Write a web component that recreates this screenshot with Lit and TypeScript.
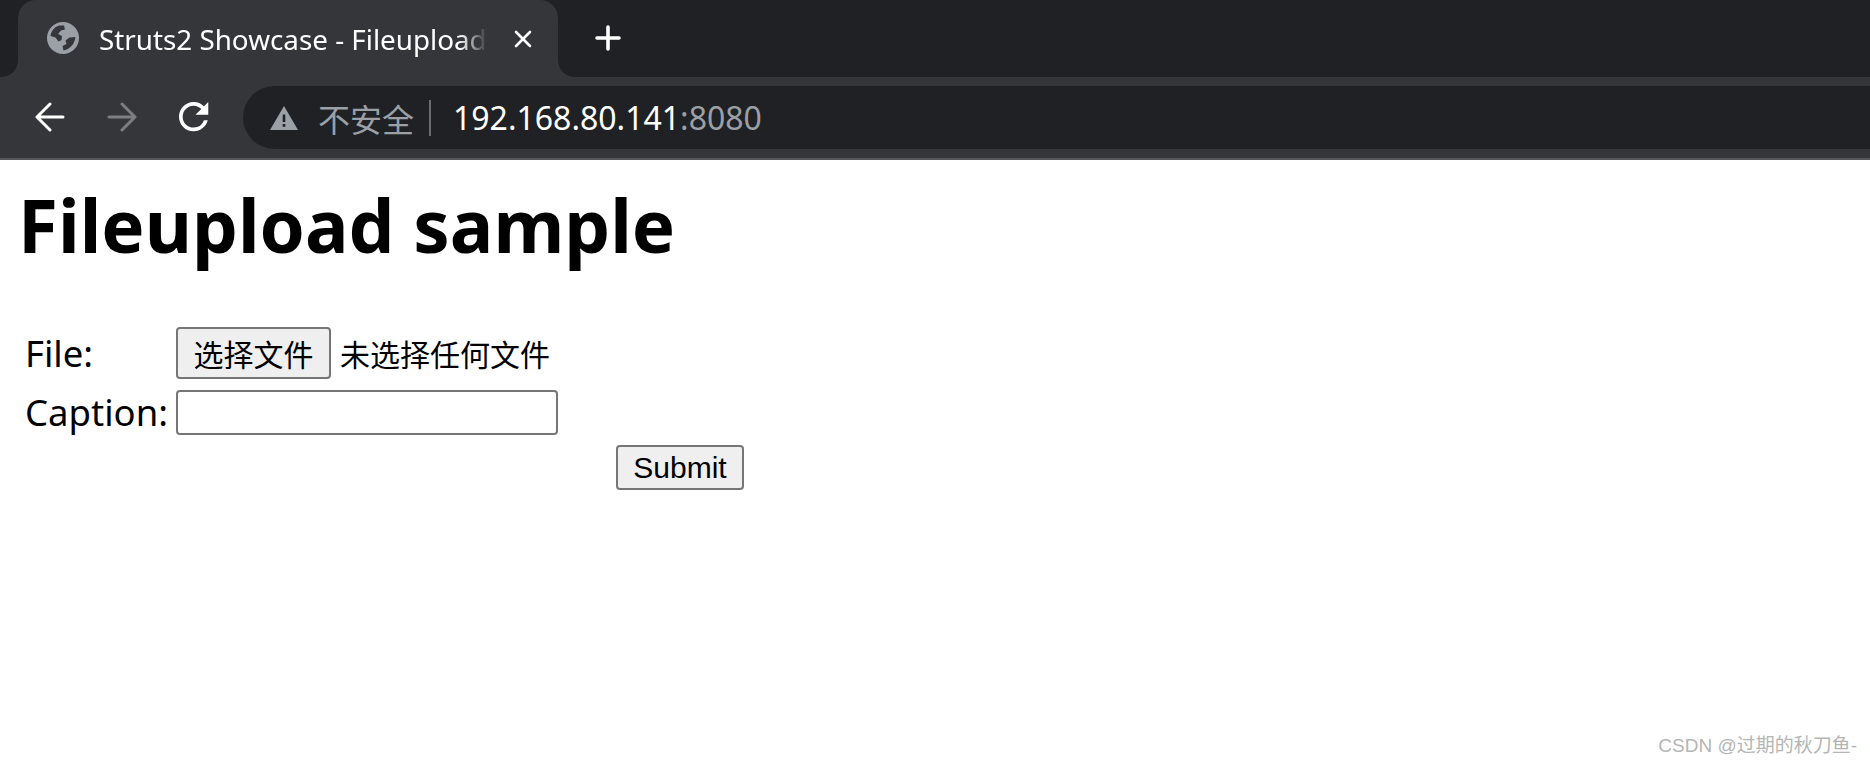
import { LitElement, html, css } from "lit";
import { customElement } from "lit/decorators.js";

const UI_FONT = css`"Noto Sans", "Noto Sans CJK SC", sans-serif`;

@customElement("app-root")
export class AppRoot extends LitElement {
  static styles = css`
    :host {
      display: block;
      width: 1870px;
      height: 766px;
      position: relative;
      overflow: hidden;
      background: #fff;
      color: #000;
      font-family: ${UI_FONT};
    }

    /* browser chrome */
    .strip {
      display: flex;
      align-items: stretch;
      height: 77px;
      padding-left: 18px;
      background: #202124;
    }
    .tab {
      position: relative;
      display: flex;
      align-items: center;
      width: 540px;
      box-sizing: border-box;
      padding: 0 0 0 29px;
      background: #35363a;
      border-radius: 18px 18px 0 0;
    }
    .tab::before,
    .tab::after {
      content: "";
      position: absolute;
      bottom: 0;
      width: 16px;
      height: 16px;
    }
    .tab::before {
      left: -16px;
      background: radial-gradient(circle at 0 0, #202124 15.5px, #35363a 16px);
    }
    .tab::after {
      right: -16px;
      background: radial-gradient(circle at 100% 0, #202124 15.5px, #35363a 16px);
    }
    .globe {
      width: 32px;
      height: 32px;
      flex: none;
      margin-top: -1px;
    }
    .title {
      width: 388px;
      margin-left: 20px;
      font-size: 27.8px;
      line-height: 36px;
      color: #fff;
      white-space: nowrap;
      overflow: hidden;
      -webkit-mask-image: linear-gradient(to right, #000 93%, transparent 100%);
      mask-image: linear-gradient(to right, #000 93%, transparent 100%);
    }
    .close {
      width: 18px;
      height: 18px;
      margin-left: 27px;
      flex: none;
    }
    .plus {
      width: 28px;
      height: 28px;
      margin: 24px 0 0 36px;
      flex: none;
    }
    .toolbar {
      display: flex;
      align-items: center;
      gap: 42px;
      height: 83px;
      box-sizing: border-box;
      padding-left: 35px;
      background: #35363a;
      border-bottom: 2px solid #55565a;
    }
    .nav {
      width: 30px;
      height: 30px;
      flex: none;
      margin-bottom: 2px;
    }
    .omnibox {
      display: flex;
      align-items: center;
      flex: 1;
      height: 63px;
      margin-left: -8px;
      padding-left: 27px;
      border-radius: 31.5px 0 0 31.5px;
      background: #202124;
      font-size: 32px;
      white-space: nowrap;
    }
    .warn {
      width: 28px;
      height: 24px;
      flex: none;
    }
    .insecure {
      margin-left: 20px;
      color: #9aa0a6;
      font-size: 32px;
    }
    .sep {
      width: 2px;
      height: 36px;
      margin: 0 22px 0 15px;
      background: #6b6d70;
    }
    .host {
      color: #fff;
    }
    .port {
      color: #9aa0a6;
    }

    /* page */
    .page {
      padding: 0 18px;
    }
    h1 {
      margin: 0;
      padding-top: 14px;
      font-size: 72.7px;
      line-height: 102px;
      font-weight: 700;
      white-space: nowrap;
    }
    table {
      margin: 40px 0 0 2px;
      border-collapse: separate;
      border-spacing: 5px 11px;
      font-size: 36.5px;
      line-height: 40px;
    }
    td {
      padding: 0;
      vertical-align: middle;
    }
    .label {
      padding-right: 3px;
    }
    .file-cell {
      display: flex;
      align-items: center;
      gap: 9px;
    }
    button {
      box-sizing: border-box;
      margin: 0;
      padding: 0;
      background: #efefef;
      border: 2px solid #767676;
      border-radius: 4px;
      color: #000;
    }
    .pick {
      width: 155px;
      height: 52px;
      font: 30px "Noto Sans CJK SC", sans-serif;
    }
    .none {
      font: 30px/40px "Noto Sans CJK SC", sans-serif;
    }
    input {
      display: block;
      box-sizing: border-box;
      width: 382px;
      height: 45px;
      margin: 0 0 -1px;
      border: 2px solid #767676;
      border-radius: 4px;
      background: #fff;
    }
    .submit {
      display: block;
      width: 128px;
      height: 45px;
      margin: 0 -186px 0 auto;
      font: 30px "Liberation Sans", sans-serif;
    }
    .mark {
      position: absolute;
      right: 13px;
      bottom: 8px;
      color: #b5b5b5;
      font: 19px/24px "Liberation Sans", "Noto Sans CJK SC", sans-serif;
    }
  `;

  render() {
    return html`
      <div class="strip">
        <div class="tab">
          <svg class="globe" viewBox="0 0 32 32">
            <circle cx="16" cy="16" r="16" fill="#9aa0a6" />
            <path
              fill="#35363a"
              d="M12 3.5C7.5 5 4 9 3.5 14l5 1.5 3 4 3-1.5 .5-4-4-2 3-3.5 4-1-1-4zM28.5 15l-6 .5-4 3 1 3.5-4 2 1 4.5c5-.5 11-5.5 12-13.5z"
            />
          </svg>
          <div class="title">Struts2 Showcase - Fileupload</div>
          <svg class="close" viewBox="0 0 18 18">
            <path d="M2 2l14 14M16 2L2 16" stroke="#fff" stroke-width="2.6" stroke-linecap="round" />
          </svg>
        </div>
        <svg class="plus" viewBox="0 0 28 28">
          <path d="M14 3v22M3 14h22" stroke="#fff" stroke-width="3.6" stroke-linecap="round" />
        </svg>
      </div>
      <div class="toolbar">
        <svg class="nav" viewBox="0 0 30 30" fill="none" stroke="#fff" stroke-width="3" stroke-linecap="round" stroke-linejoin="round">
          <path d="M28 15H2M15 2L2 15l13 13" />
        </svg>
        <svg class="nav" viewBox="0 0 30 30" fill="none" stroke="#7d7e81" stroke-width="3" stroke-linecap="round" stroke-linejoin="round">
          <path d="M2 15h26M15 2l13 13-13 13" />
        </svg>
        <svg class="nav" viewBox="4 4 16.4 16.4">
          <path
            fill="#fff"
            d="M17.65 6.35A7.958 7.958 0 0 0 12 4c-4.42 0-7.99 3.58-7.99 8s3.57 8 7.99 8c3.73 0 6.84-2.55 7.73-6h-2.08A5.99 5.99 0 0 1 12 18c-3.31 0-6-2.69-6-6s2.69-6 6-6c1.66 0 3.14.69 4.22 1.78L13 11h7V4l-2.35 2.35z"
          />
        </svg>
        <div class="omnibox">
          <svg class="warn" viewBox="0 0 28 24">
            <path fill="#9aa0a6" fill-rule="evenodd" d="M14 0l14 24H0zM12.7 8.5v7.5h2.6V8.5zM12.7 18v2.8h2.6V18z" />
          </svg>
          <span class="insecure">不安全</span>
          <span class="sep"></span>
          <span class="host">192.168.80.141</span><span class="port">:8080</span>
        </div>
      </div>
      <div class="page">
        <h1>Fileupload sample</h1>
        <table>
          <tr>
            <td class="label">File:</td>
            <td>
              <div class="file-cell">
                <button class="pick">选择文件</button>
                <span class="none">未选择任何文件</span>
              </div>
            </td>
          </tr>
          <tr>
            <td class="label">Caption:</td>
            <td><input type="text" /></td>
          </tr>
          <tr>
            <td colspan="2"><button class="submit">Submit</button></td>
          </tr>
        </table>
      </div>
      <div class="mark">CSDN @过期的秋刀鱼-</div>
    `;
  }
}
